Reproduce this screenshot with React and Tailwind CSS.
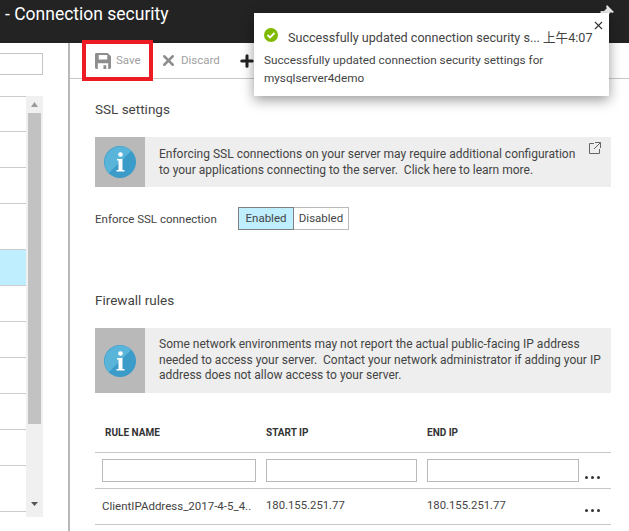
import { X, Plus } from "lucide-react";

const font = { fontFamily: 'Roboto, "Noto Sans CJK SC", sans-serif' };

// bottom edge of each row in the side list is what the heights come from
const leftRows = [35, 36, 36, 46, 36, 36, 36, 36, 36, 36, 46];

function InfoIcon() {
  return (
    <svg width="32" height="32" viewBox="0 0 32 32">
      <circle cx="16" cy="16" r="16" fill="#3b9bc9" />
      <path d="M4.7 27.3A16 16 0 0 1 27.3 4.7Z" fill="#59b4d9" />
      <circle cx="16.5" cy="8.5" r="2.3" fill="#fff" />
      <path d="M13 13h5.5v11h2v1.5h-8V24h2v-9.500h-1.500Z" fill="#fff" />
    </svg>
  );
}

function InfoBox({ height, children }) {
  return (
    <div className={`flex bg-[#eeeeee] ${height}`}>
      <div className="w-[50px] shrink-0 bg-[#b9b9b9] flex items-center justify-center">
        <InfoIcon />
      </div>
      <div className="pl-[14px] pr-2 flex-1 flex items-center text-[12px] leading-[15.500px] text-[#444] whitespace-nowrap">
        {children}
      </div>
    </div>
  );
}

function Dots({ className }) {
  return <div className={`flex gap-[3px] ${className}`}>
    <span className="w-[3px] h-[3px] rounded-full bg-[#333]" />
    <span className="w-[3px] h-[3px] rounded-full bg-[#333]" />
    <span className="w-[3px] h-[3px] rounded-full bg-[#333]" />
  </div>;
}

export default function App() {
  return (
    <div className="relative w-[629px] h-[531px] overflow-hidden bg-white" style={font}>
      {/* Header */}
      <div className="h-[43px] bg-[#232323] text-white text-[17.500px] leading-[28px] pl-[5px]">
        - Connection security
      </div>

      <div className="flex h-[488px]">
        {/* Side list */}
        <div className="w-[70px] shrink-0 border-r-2 border-[#b9b9b9]">
          <div className="h-[22px] w-[43px] mt-[10px] border border-l-0 border-[#c4c4c4]" />
          <div className="flex mt-[21px]">
            <div className="w-[26px] border-t border-[#cccccc]">
              {leftRows.map((h, i) => (
                <div
                  key={i}
                  style={{ height: h }}
                  className={`border-b border-[#cccccc] ${i === 4 ? "bg-[#bfeeff]" : ""}`}
                />
              ))}
            </div>
            <div className="w-[17px] h-[421px] bg-[#f0f0f0] flex flex-col items-center">
              <svg width="9" height="17" viewBox="0 0 9 17" className="shrink-0">
                <path d="M4.500 6L8 11H1Z" fill="#9a9a9a" />
              </svg>
              <div className="w-[13px] h-[311px] bg-[#c2c2c2]" />
              <svg width="9" height="6" viewBox="0 0 9 6" className="mt-[77px] shrink-0">
                <path d="M1 1h7L4.500 5Z" fill="#555" />
              </svg>
            </div>
          </div>
        </div>

        {/* Main blade */}
        <div className="flex-1">
          <div className="h-[36px] border-b border-[#c8c8c8] flex items-center text-[11.500px] text-[#a0a0a0]">
            <svg width="16" height="16" viewBox="0 0 17 17" className="ml-[25px]">
              <path d="M0 1.500A1.500 1.500 0 0 1 1.500 0H13.500L17 3.500V15.500A1.500 1.500 0 0 1 15.500 17H1.500A1.500 1.500 0 0 1 0 15.500ZM4 2V7H13V2ZM3 11V17H14V11Z" fill="#8e8e8e" fillRule="evenodd" />
              <rect x="9" y="13" width="3" height="4" fill="#8e8e8e" />
            </svg>
            <span className="ml-[5px] w-[44px]">Save</span>
            <X size={17} strokeWidth={3.500} className="text-[#8e8e8e]" />
            <span className="ml-[4px] w-[53px]">Discard</span>
            <Plus size={18} strokeWidth={4} className="ml-[4px] text-[#222]" />
          </div>

          <div className="ml-[25px] mr-[18px]">
            <div className="mt-[20px] h-[20px] leading-[20px] text-[13.500px] text-[#444]">SSL settings</div>
            <div className="mt-[18px]">
              <InfoBox height="h-[50px]">
                <div className="relative w-full pt-[1px]">
                  Enforcing SSL connections on your server may require additional configuration
                  <br />
                  to your applications connecting to the server.&nbsp; Click here to learn more.
                  <svg width="12" height="12" viewBox="0 0 12 12" className="absolute right-[2px] -top-[4px]" fill="none" stroke="#666">
                    <path d="M5 1.500H.5v10h10V7M6 .5h5.500V6M11.500 .5 5 7" />
                  </svg>
                </div>
              </InfoBox>
            </div>
            <div className="mt-[20px] flex items-center h-[23px]">
              <div className="w-[143px] text-[11.500px] text-[#444] pt-[2px]">Enforce SSL connection</div>
              <div className="flex h-[23px] text-[11.500px] text-[#444] leading-[20px]">
                <div className="w-[56px] bg-[#bfeeff] border border-[#7f7f7f] text-center">Enabled</div>
                <div className="w-[55px] border border-l-0 border-[#b9b9b9] text-center">Disabled</div>
              </div>
            </div>

            <div className="mt-[60px] h-[20px] leading-[20px] text-[13.500px] text-[#444]">Firewall rules</div>
            <div className="mt-[18px]">
              <InfoBox height="h-[65px]">
                <div>
                  Some network environments may not report the actual public-facing IP address
                  <br />
                  needed to access your server.&nbsp; Contact your network administrator if adding your IP
                  <br />
                  address does not allow access to your server.
                </div>
              </InfoBox>
            </div>

            {/* Firewall table */}
            <div className="mt-[28px] h-[32px] flex text-[10px] font-bold text-[#333] leading-[24px] border-b border-[#c8c8c8]">
              <div className="w-[171px] pl-[10px]">RULE NAME</div>
              <div className="w-[161px]">START IP</div>
              <div>END IP</div>
            </div>
            <div className="h-[36px] flex items-center border-b border-[#c8c8c8] pl-[7px]">
              <div className="w-[154px] h-[23px] border border-[#b9b9b9]" />
              <div className="w-[151px] h-[23px] border border-[#b9b9b9] ml-[10px]" />
              <div className="w-[152px] h-[23px] border border-[#b9b9b9] ml-[10px]" />
              <Dots className="ml-[6px] mt-[14px]" />
            </div>
            <div className="h-[36px] flex items-center border-b border-[#c8c8c8] pl-[7px] text-[11.500px] text-[#444]">
              <div className="w-[164px] whitespace-nowrap overflow-hidden">ClientIPAddress_2017-4-5_4..</div>
              <div className="w-[161px] text-[11.300px]">180.155.251.77</div>
              <div className="w-[152px] text-[11.300px]">180.155.251.77</div>
              <Dots className="ml-[6px] mt-[8px]" />
            </div>
          </div>
        </div>
      </div>

      {/* Red highlight around Save */}
      <div className="absolute left-[82px] top-[40px] w-[71px] h-[41px] border-4 border-[#ed1c24]" />

      {/* Pin behind the toast */}
      <svg width="16" height="16" viewBox="0 0 16 16" className="absolute left-[598px] top-[5px]">
        <path d="M9 0l7 7-2 1-1-1-3 3 0 3-1 1-3-3-4 4-1-1 4-4-3-3 1-1h3l3-3-1-1Z" fill="#e8e8e8" />
      </svg>

      {/* Toast */}
      <div className="absolute left-[254px] top-[13px] w-[355px] h-[83px] bg-white shadow-[0_4px_12px_rgba(0,0,0,0.4)] text-[#444]">
        <svg width="14" height="14" viewBox="0 0 14 14" className="absolute left-[10px] top-[15px]">
          <circle cx="7" cy="7" r="7" fill="#7fba00" />
          <path d="M3.500 7l2.500 2.500 4.500-4.500" fill="none" stroke="#fff" strokeWidth="1.800" />
        </svg>
        <div className="absolute left-[34px] top-[16px] whitespace-nowrap text-[12.600px] leading-[18px]">
          Successfully updated connection security s... 上午4:07
        </div>
        <X size={13} strokeWidth={2} className="absolute left-[338px] top-[6px] text-[#333]" />
        <div className="absolute left-[10px] top-[38px] text-[11.750px] leading-[18px]">
          Successfully updated connection security settings for
          <br />
          mysqlserver4demo
        </div>
      </div>
    </div>
  );
}
